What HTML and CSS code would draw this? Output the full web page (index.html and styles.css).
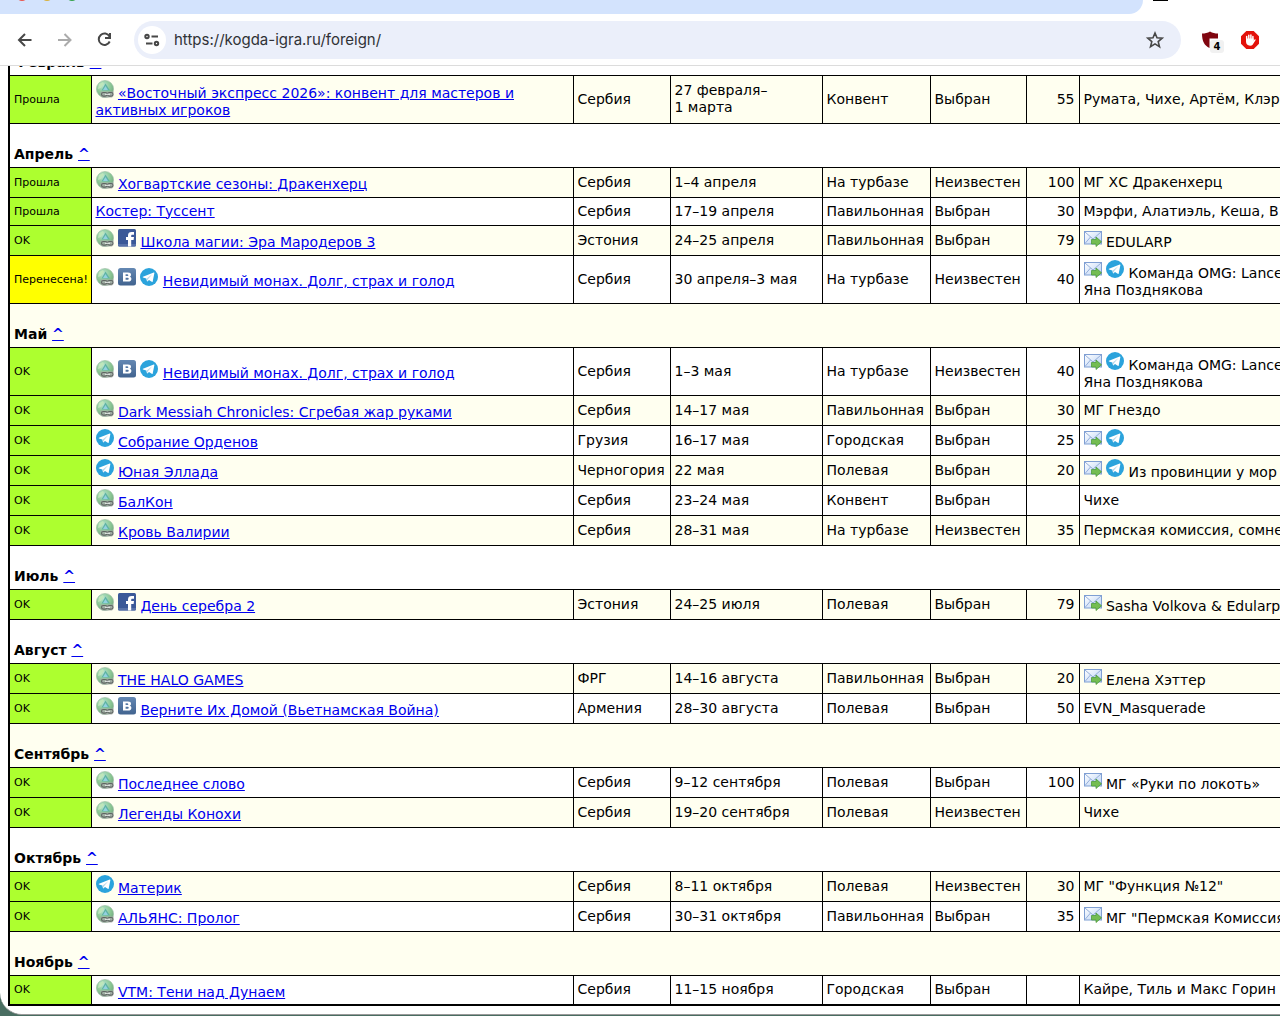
FILE: index.html
```html
<!DOCTYPE html>
<html lang="ru">
  <head>
    <meta charset="UTF-8" />
    <meta name="viewport" content="width=device-width, initial-scale=1.0" />
    <title>Когда-игра</title>
    <link rel="stylesheet" href="styles.css">
  </head>
  <body>
    <!-- иконки -->
    <svg class="sprite" width="0" height="0" aria-hidden="true">
      <defs>
        <radialGradient id="globe" cx="0.4" cy="0.3" r="0.75">
          <stop offset="0" stop-color="#b4e2d2" />
          <stop offset="0.55" stop-color="#8cc995" />
          <stop offset="1" stop-color="#6fa27c" />
        </radialGradient>
        <linearGradient id="vkBg" x1="0" y1="0" x2="0" y2="1">
          <stop offset="0" stop-color="#6488b3" />
          <stop offset="1" stop-color="#41638f" />
        </linearGradient>
        <linearGradient id="paper" x1="0" y1="0" x2="1" y2="1">
          <stop offset="0" stop-color="#ffffff" />
          <stop offset="1" stop-color="#b9d2f5" />
        </linearGradient>
        <symbol id="web" viewBox="0 0 18 18">
          <circle cx="9" cy="9" r="8.6" fill="url(#globe)" stroke="#9dbda6" stroke-width="0.6" />
          <path d="M3 4l4-2 1 2-3 4-3 1z" fill="#bfe6ba" />
          <path d="M9.500 3.500l4.500 7H5.500z" fill="#5fb3a4" />
          <path d="M9.500 6l2.500 4H7z" fill="#93d0e0" />
          <path d="M4.500 11.500H17.500v4.500l-1.500 1.500H6.500L4.500 15.500z" fill="#a3aaa6" opacity="0.85" />
          <rect x="5.500" y="12.500" width="5.500" height="3.600" rx="1.800" fill="none" stroke="#5f6663" stroke-width="1.100" />
          <rect x="11.500" y="12.500" width="5.500" height="3.600" rx="1.800" fill="none" stroke="#5f6663" stroke-width="1.100" />
          <path d="M9 14.300h5" stroke="#eef1ef" stroke-width="1" />
        </symbol>
        <symbol id="fb" viewBox="0 0 18 18">
          <rect width="18" height="17.500" rx="1.500" fill="#3b5998" />
          <path d="M0 15h18v1a1.500 1.500 0 0 1-1.500 1.500h-15A1.500 1.500 0 0 1 0 16z" fill="#5872a9" />
          <path d="M10 17.500V11H8V8h2V6.500C10 4 11.300 3 13.500 3H16v2.800h-1.500c-1 0-1.300.4-1.300 1.200v1H16l-.4 3h-2.400v6.500z" fill="#fff" />
        </symbol>
        <symbol id="vk" viewBox="0 0 18 18">
          <rect width="18" height="17.500" rx="2.500" fill="url(#vkBg)" />
          <path fill-rule="evenodd" d="M5 4.500h5c2 0 3 .8 3 2.200 0 1-.5 1.600-1.400 2 1.200.3 1.800 1.100 1.800 2.200 0 1.700-1.300 2.600-3.400 2.600H5zm2.600 1.800v1.800h1.500c.8 0 1.200-.3 1.200-.9s-.4-.9-1.200-.9zm0 3.400v2h1.800c.9 0 1.300-.4 1.300-1s-.4-1-1.300-1z" fill="#fff" />
        </symbol>
        <symbol id="tg" viewBox="0 0 18 18">
          <circle cx="9" cy="9" r="9" fill="#2ba3dc" />
          <path d="M3 8.800l10.700-4.300c.5-.2.8.1.7.6l-1.700 8.300c-.1.6-.5.7-1 .4L9 11.900l-1.400 1.400c-.3.3-.6.2-.7-.3l-.6-2.500L3 9.500c-.5-.2-.5-.5 0-.7z" fill="#fff" />
          <path d="M6.600 10.500l5.700-4.200-4.300 5-.5 1.700z" fill="#b9d9ea" />
        </symbol>
        <symbol id="mail" viewBox="0 0 18 18">
          <rect x="0.500" y="2.500" width="17" height="12.500" fill="url(#paper)" stroke="#7f9fd3" />
          <path d="M1 3l8 7 8-7M1 14.500L6.500 8M17 14.500L11.500 8" fill="none" stroke="#94aeda" stroke-width="1" />
          <path d="M7.500 10.500h4.500V8l5.500 4.800-5.500 4.700v-2.500H7.500z" fill="#74bd52" stroke="#4b9a3b" stroke-width="0.800" />
        </symbol>
      </defs>
    </svg>

    <div class="window">
      <!-- вкладки -->
      <div class="tabs">
        <div class="tabs-bar">
          <i class="light red"></i>
          <i class="light yellow"></i>
          <i class="light green"></i>
        </div>
        <div class="tabs-mark"></div>
      </div>

      <!-- панель браузера -->
      <div class="toolbar">
        <button class="nav" type="button" aria-label="Назад">
          <svg width="20" height="20" viewBox="0 0 20 20"><path d="M16.500 10H4.500M10 4L4 10l6 6" /></svg>
        </button>
        <button class="nav nav-off" type="button" aria-label="Вперёд">
          <svg width="20" height="20" viewBox="0 0 20 20"><path d="M3 10h12M9.500 4l6 6-6 6" /></svg>
        </button>
        <button class="nav" type="button" aria-label="Обновить">
          <svg width="20" height="20" viewBox="0 0 20 20"><path d="M14.500 6.500A5.700 5.700 0 1 0 14.700 11.500M15 3v5h-5" /></svg>
        </button>
        <div class="address">
          <button class="site" type="button" aria-label="О сайте">
            <svg width="18" height="18" viewBox="0 0 18 18"><circle cx="4" cy="5.500" r="1.700" /><path d="M8.500 5.500H15M3 12.500h6.500" /><circle cx="13.500" cy="12.500" r="1.700" /></svg>
          </button>
          <input class="url" type="text" aria-label="Адрес" value="https://kogda-igra.ru/foreign/" />
          <button class="star" type="button" aria-label="В закладки">
            <svg width="20" height="20" viewBox="0 0 20 20"><path d="M10 3l2 4.800 5.200.4-4 3.400 1.300 5.100-4.500-2.800-4.500 2.800 1.300-5.100-4-3.400L8 7.800z" /></svg>
          </button>
        </div>
        <button class="ext" type="button" aria-label="Блокировщик">
          <svg width="18" height="18" viewBox="0 0 18 18"><path d="M1 2.500c3 0 5.500-.5 8-2 2.500 1.500 5 2 8 2V7.500H8.500V17C3.500 14.500 1 10.500 1 2.500z" fill="#800610" /></svg>
          <span class="count">4</span>
        </button>
        <button class="ext" type="button" aria-label="Стоп-реклама">
          <svg width="18" height="18" viewBox="0 0 18 18"><path d="M5.300 0h7.400L18 5.300v7.400L12.700 18H5.300L0 12.700V5.300z" fill="#e3120b" /><path d="M5.700 8V5.500M7.800 8V4.300M9.900 8V4M11.900 8.500V5.500" stroke="#fff" stroke-width="1.500" stroke-linecap="round" /><path d="M5 7.500h7.600v2l1-1c.7-.4 1.300.2.900.8l-2.700 4.200c-.6.800-1.400 1.200-2.600 1.200-2.700 0-4.200-1.400-4.200-4.100z" fill="#fff" /></svg>
        </button>
      </div>

      <!-- страница -->
      <div class="page">
        <table class="games">
          <colgroup>
            <col class="c-status" />
            <col class="c-name" />
            <col class="c-region" />
            <col class="c-date" />
            <col class="c-type" />
            <col class="c-place" />
            <col class="c-count" />
            <col class="c-team" />
          </colgroup>
          <tbody>
            <tr class="month"><th colspan="8">Февраль <a href="#top">^</a></th></tr>
            <tr class="tall">
              <td class="ok">Прошла</td>
              <td><svg class="icon"><use href="#web" /></svg> <a href="#">«Восточный экспресс 2026»: конвент для мастеров и<br />активных игроков</a></td>
              <td>Сербия</td><td>27 февраля–<br />1 марта</td><td>Конвент</td><td>Выбран</td><td class="num">55</td>
              <td>Румата, Чихе, Артём, Клэр</td>
            </tr>

            <tr class="month"><th colspan="8">Апрель <a href="#top">^</a></th></tr>
            <tr>
              <td class="ok">Прошла</td>
              <td><svg class="icon"><use href="#web" /></svg> <a href="#">Хогвартские сезоны: Дракенхерц</a></td>
              <td>Сербия</td><td>1–4 апреля</td><td>На турбазе</td><td>Неизвестен</td><td class="num">100</td>
              <td>МГ ХС Дракенхерц</td>
            </tr>
            <tr class="short">
              <td class="ok">Прошла</td>
              <td><a href="#">Костер: Туссент</a></td>
              <td>Сербия</td><td>17–19 апреля</td><td>Павильонная</td><td>Выбран</td><td class="num">30</td>
              <td>Мэрфи, Алатиэль, Кеша, В</td>
            </tr>
            <tr>
              <td class="ok">OK</td>
              <td><svg class="icon"><use href="#web" /></svg> <svg class="icon"><use href="#fb" /></svg> <a href="#">Школа магии: Эра Мародеров 3</a></td>
              <td>Эстония</td><td>24–25 апреля</td><td>Павильонная</td><td>Выбран</td><td class="num">79</td>
              <td><svg class="icon"><use href="#mail" /></svg> EDULARP</td>
            </tr>
            <tr class="tall">
              <td class="moved">Перенесена!</td>
              <td><svg class="icon"><use href="#web" /></svg> <svg class="icon"><use href="#vk" /></svg> <svg class="icon"><use href="#tg" /></svg> <a href="#">Невидимый монах. Долг, страх и голод</a></td>
              <td>Сербия</td><td>30 апреля–3 мая</td><td>На турбазе</td><td>Неизвестен</td><td class="num">40</td>
              <td><svg class="icon"><use href="#mail" /></svg> <svg class="icon"><use href="#tg" /></svg> Команда OMG: Lance<br />Яна Позднякова</td>
            </tr>

            <tr class="month"><th colspan="8">Май <a href="#top">^</a></th></tr>
            <tr class="tall">
              <td class="ok">OK</td>
              <td><svg class="icon"><use href="#web" /></svg> <svg class="icon"><use href="#vk" /></svg> <svg class="icon"><use href="#tg" /></svg> <a href="#">Невидимый монах. Долг, страх и голод</a></td>
              <td>Сербия</td><td>1–3 мая</td><td>На турбазе</td><td>Неизвестен</td><td class="num">40</td>
              <td><svg class="icon"><use href="#mail" /></svg> <svg class="icon"><use href="#tg" /></svg> Команда OMG: Lance<br />Яна Позднякова</td>
            </tr>
            <tr>
              <td class="ok">OK</td>
              <td><svg class="icon"><use href="#web" /></svg> <a href="#">Dark Messiah Chronicles: Сгребая жар руками</a></td>
              <td>Сербия</td><td>14–17 мая</td><td>Павильонная</td><td>Выбран</td><td class="num">30</td>
              <td>МГ Гнездо</td>
            </tr>
            <tr>
              <td class="ok">OK</td>
              <td><svg class="icon"><use href="#tg" /></svg> <a href="#">Собрание Орденов</a></td>
              <td>Грузия</td><td>16–17 мая</td><td>Городская</td><td>Выбран</td><td class="num">25</td>
              <td><svg class="icon"><use href="#mail" /></svg> <svg class="icon"><use href="#tg" /></svg></td>
            </tr>
            <tr>
              <td class="ok">OK</td>
              <td><svg class="icon"><use href="#tg" /></svg> <a href="#">Юная Эллада</a></td>
              <td>Черногория</td><td>22 мая</td><td>Полевая</td><td>Выбран</td><td class="num">20</td>
              <td><svg class="icon"><use href="#mail" /></svg> <svg class="icon"><use href="#tg" /></svg> Из провинции у мор</td>
            </tr>
            <tr>
              <td class="ok">OK</td>
              <td><svg class="icon"><use href="#web" /></svg> <a href="#">БалКон</a></td>
              <td>Сербия</td><td>23–24 мая</td><td>Конвент</td><td>Выбран</td><td class="num"></td>
              <td>Чихе</td>
            </tr>
            <tr>
              <td class="ok">OK</td>
              <td><svg class="icon"><use href="#web" /></svg> <a href="#">Кровь Валирии</a></td>
              <td>Сербия</td><td>28–31 мая</td><td>На турбазе</td><td>Неизвестен</td><td class="num">35</td>
              <td>Пермская комиссия, сомне</td>
            </tr>

            <tr class="month"><th colspan="8">Июль <a href="#top">^</a></th></tr>
            <tr>
              <td class="ok">OK</td>
              <td><svg class="icon"><use href="#web" /></svg> <svg class="icon"><use href="#fb" /></svg> <a href="#">День серебра 2</a></td>
              <td>Эстония</td><td>24–25 июля</td><td>Полевая</td><td>Выбран</td><td class="num">79</td>
              <td><svg class="icon"><use href="#mail" /></svg> Sasha Volkova &amp; Edularp</td>
            </tr>

            <tr class="month"><th colspan="8">Август <a href="#top">^</a></th></tr>
            <tr>
              <td class="ok">OK</td>
              <td><svg class="icon"><use href="#web" /></svg> <a href="#">THE HALO GAMES</a></td>
              <td>ФРГ</td><td>14–16 августа</td><td>Павильонная</td><td>Выбран</td><td class="num">20</td>
              <td><svg class="icon"><use href="#mail" /></svg> Елена Хэттер</td>
            </tr>
            <tr>
              <td class="ok">OK</td>
              <td><svg class="icon"><use href="#web" /></svg> <svg class="icon"><use href="#vk" /></svg> <a href="#">Верните Их Домой (Вьетнамская Война)</a></td>
              <td>Армения</td><td>28–30 августа</td><td>Полевая</td><td>Выбран</td><td class="num">50</td>
              <td>EVN_Masquerade</td>
            </tr>

            <tr class="month"><th colspan="8">Сентябрь <a href="#top">^</a></th></tr>
            <tr>
              <td class="ok">OK</td>
              <td><svg class="icon"><use href="#web" /></svg> <a href="#">Последнее слово</a></td>
              <td>Сербия</td><td>9–12 сентября</td><td>Полевая</td><td>Выбран</td><td class="num">100</td>
              <td><svg class="icon"><use href="#mail" /></svg> МГ «Руки по локоть»</td>
            </tr>
            <tr>
              <td class="ok">OK</td>
              <td><svg class="icon"><use href="#web" /></svg> <a href="#">Легенды Конохи</a></td>
              <td>Сербия</td><td>19–20 сентября</td><td>Полевая</td><td>Неизвестен</td><td class="num"></td>
              <td>Чихе</td>
            </tr>

            <tr class="month"><th colspan="8">Октябрь <a href="#top">^</a></th></tr>
            <tr>
              <td class="ok">OK</td>
              <td><svg class="icon"><use href="#tg" /></svg> <a href="#">Материк</a></td>
              <td>Сербия</td><td>8–11 октября</td><td>Полевая</td><td>Неизвестен</td><td class="num">30</td>
              <td>МГ "Функция №12"</td>
            </tr>
            <tr>
              <td class="ok">OK</td>
              <td><svg class="icon"><use href="#web" /></svg> <a href="#">АЛЬЯНС: Пролог</a></td>
              <td>Сербия</td><td>30–31 октября</td><td>Павильонная</td><td>Выбран</td><td class="num">35</td>
              <td><svg class="icon"><use href="#mail" /></svg> МГ "Пермская Комиссия</td>
            </tr>

            <tr class="month"><th colspan="8">Ноябрь <a href="#top">^</a></th></tr>
            <tr>
              <td class="ok">OK</td>
              <td><svg class="icon"><use href="#web" /></svg> <a href="#">VTM: Тени над Дунаем</a></td>
              <td>Сербия</td><td>11–15 ноября</td><td>Городская</td><td>Выбран</td><td class="num"></td>
              <td>Кайре, Тиль и Макс Горин</td>
            </tr>
          </tbody>
        </table>
      </div>
    </div>
  </body>
</html>
```
FILE: styles.css
```css
* {
  box-sizing: border-box;
}

body {
  margin: 0;
  background: #4a6e62;
  color: #000;
  font-family: Verdana, "DejaVu Sans", sans-serif;
  font-size: 14px;
  line-height: 17px;
}

button {
  display: flex;
  align-items: center;
  justify-content: center;
  padding: 0;
  border: 0;
  background: none;
}

.sprite {
  position: absolute;
}

.window {
  overflow: hidden;
  background: #fff;
  border-bottom: 1px solid #999;
  border-bottom-left-radius: 22px;
}

/* вкладки */
.tabs {
  display: flex;
  height: 14px;
  background: #fff;
}

.tabs-bar {
  display: flex;
  gap: 13px;
  width: 1143px;
  padding-left: 16px;
  overflow: hidden;
  background: #d3e3fd;
  border-bottom-right-radius: 14px;
}

.light {
  width: 12px;
  height: 12px;
  margin-top: -11px;
  border-radius: 50%;
}

.red {
  background: #e8554d;
}

.yellow {
  background: #d9b13b;
}

.green {
  background: #35a24a;
}

.tabs-mark {
  width: 15px;
  height: 1px;
  margin-left: 10px;
  background: #000;
}

/* панель браузера */
.toolbar {
  display: flex;
  align-items: center;
  height: 52px;
  padding: 0 19px 0 14px;
  border-bottom: 1px solid #dcdcdc;
  gap: 18px;
}

.nav {
  width: 22px;
  height: 22px;
}

.nav svg,
.site svg,
.star svg {
  fill: none;
  stroke: #474747;
  stroke-width: 2;
}

.nav-off svg {
  stroke: #ababab;
}

.address {
  display: flex;
  flex: 1;
  align-items: center;
  height: 38px;
  padding: 0 16px 0 4px;
  border-radius: 19px;
  background: #ebeffa;
}

.site {
  width: 28px;
  height: 28px;
  border-radius: 50%;
  background: #fff;
}

.url {
  flex: 1;
  min-width: 0;
  padding: 0 8px;
  border: 0;
  background: none;
  color: #303236;
  font-family: Inter, "Liberation Sans", sans-serif;
  font-size: 15px;
}

.star svg {
  stroke-width: 1.6;
}

.ext {
  position: relative;
  width: 22px;
  height: 22px;
}

.count {
  position: absolute;
  left: 11px;
  top: 11px;
  width: 14px;
  border-radius: 3px;
  background: #f1f1f1;
  font: bold 10px/13px "DejaVu Sans", sans-serif;
}

/* таблица игр */
.page {
  padding: 0 0 8px 8px;
  overflow: hidden;
}

.games {
  width: 1472px;
  /* страница прокручена до февраля */
  margin-top: -36px;
  border: 2px solid #000;
  border-collapse: collapse;
  table-layout: fixed;
}

.c-status { width: 82px; }
.c-name { width: 482px; }
.c-region { width: 97px; }
.c-date { width: 152px; }
.c-type { width: 108px; }
.c-place { width: 96px; }
.c-count { width: 53px; }

.games tr {
  height: 30px;
}

.games tr:nth-child(even) {
  background: ivory;
}

.games .short {
  height: 28px;
}

.games .tall {
  height: 48px;
}

.games .month {
  height: 44px;
}

.games td,
.games th {
  padding: 0 4px;
  border: 1px solid #000;
  text-align: left;
  white-space: nowrap;
}

.games th {
  padding-bottom: 4px;
  vertical-align: bottom;
}

.games .ok,
.games .moved {
  font-size: 11px;
  background: greenyellow;
}

.games .moved {
  background: yellow;
}

.games .num {
  text-align: right;
}

.games a {
  color: #0000ee;
}

.icon {
  width: 18px;
  height: 18px;
}
```
